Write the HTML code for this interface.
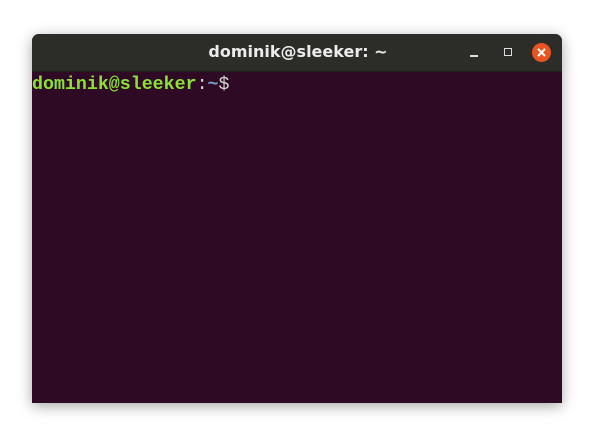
<!DOCTYPE html>
<html><head><style>
body{margin:0;width:593px;height:434px;background:#fff;position:relative;overflow:hidden}
.win{position:absolute;left:32px;top:34px;width:530px;height:369px;background:#2f0a24;border-radius:7px 7px 0 0;overflow:hidden;box-shadow:0 3px 14px rgba(0,0,0,.35)}
.tb{height:37px;background:#2c2c28;position:relative;border-bottom:1px solid #1f1f1c}
.title{position:absolute;left:2px;right:0;top:8px;text-align:center;color:#ececec;font:bold 16px "DejaVu Sans","Liberation Sans",sans-serif}
.min{position:absolute;left:438px;top:21px;width:8px;height:2px;background:#ddd}
.max{position:absolute;left:472px;top:14px;width:6px;height:6px;border:1.5px solid #ddd}
.cls{position:absolute;left:500px;top:9px;width:19px;height:19px;border-radius:50%;background:#e95420}
.p{position:absolute;left:0;top:41px;font:bold 18.3px "Liberation Mono",monospace;color:#8ae234;white-space:pre}
</style></head><body>
<div class="win"><div class="tb"><div class="title">dominik@sleeker: ~</div><div class="min"></div><div class="max"></div><div class="cls"><svg width="19" height="19"><path d="M6 6L13 13M13 6L6 13" stroke="#fff" stroke-width="2"/></svg></div></div>
<div class="p">dominik@sleeker<span style="color:#d3d7cf;font-weight:normal">:</span><span style="color:#729fcf">~</span><span style="color:#d3d7cf;font-weight:normal">$</span></div></div>
</body></html>
